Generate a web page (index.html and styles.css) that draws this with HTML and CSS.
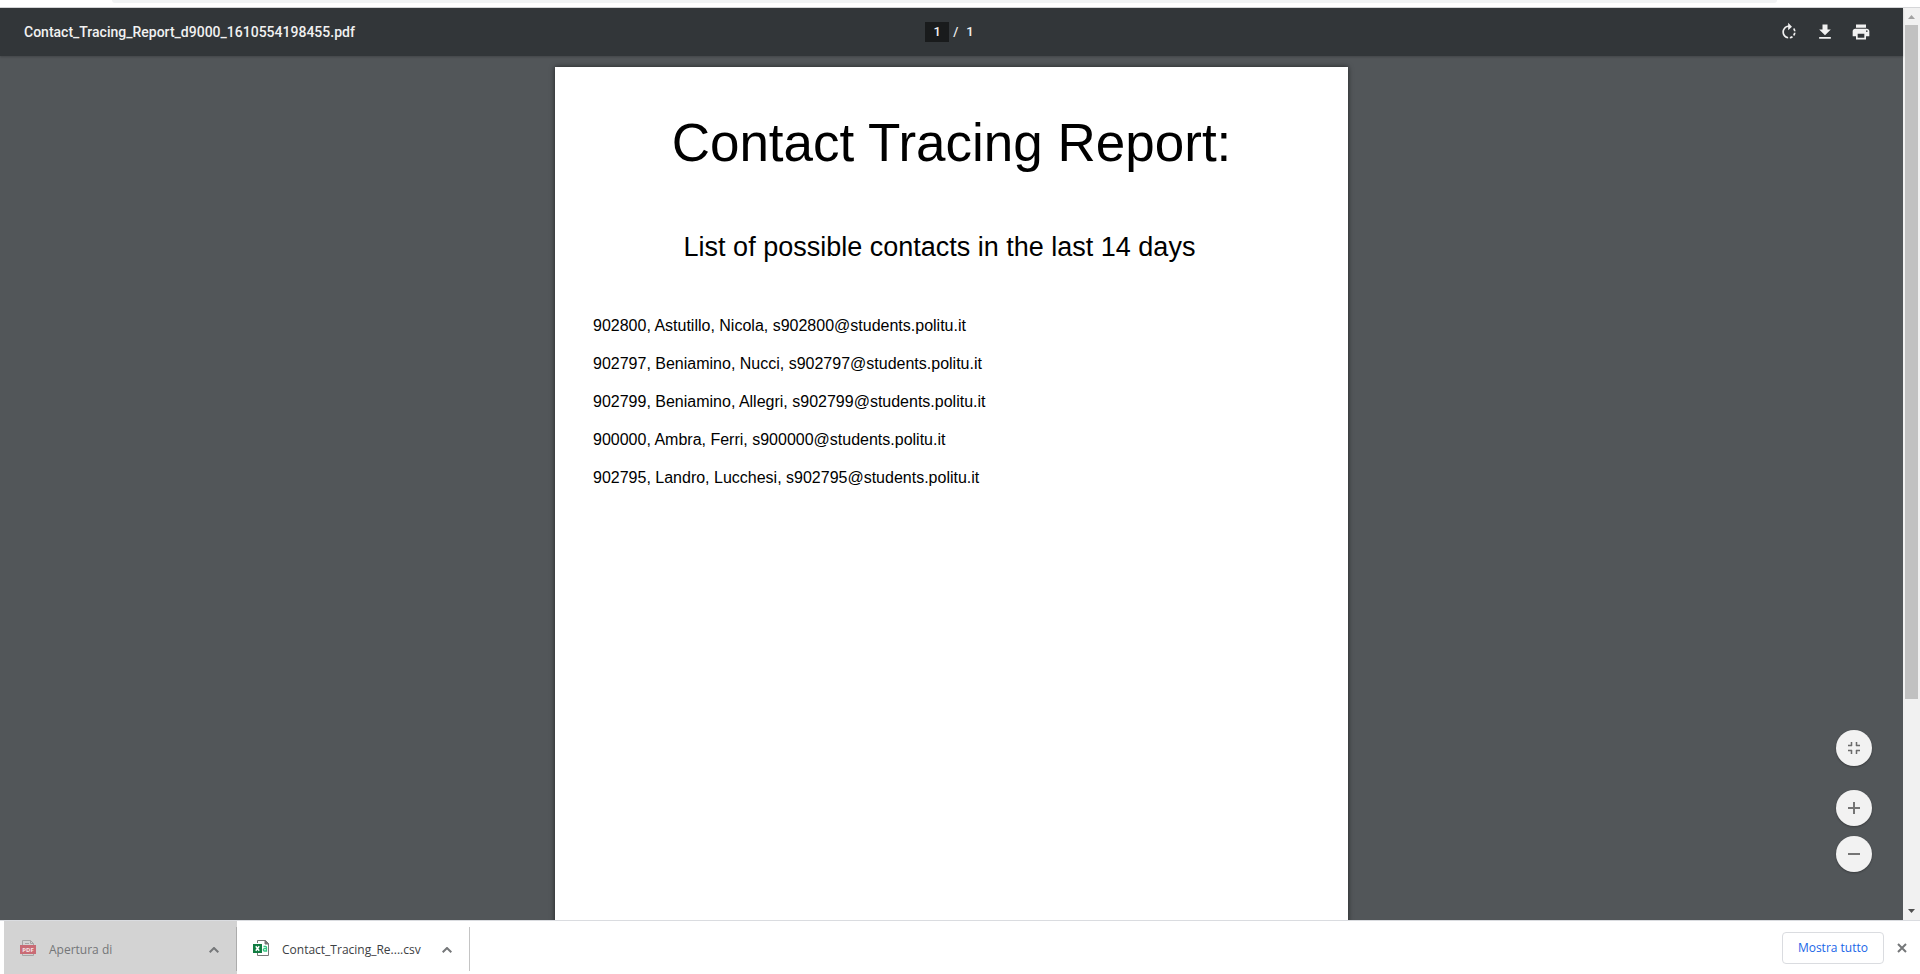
FILE: index.html
```html
<!DOCTYPE html>
<html lang="it">
<head>
<meta charset="utf-8">
<title>Contact_Tracing_Report_d9000_1610554198455.pdf</title>
<link rel="stylesheet" href="styles.css">
</head>
<body>
<div class="browser-edge"><div class="address-edge"></div></div>
<div class="content">
  <section class="viewer">
    <header class="toolbar">
      <div class="file-name">Contact_Tracing_Report_d9000_1610554198455.pdf</div>
      <div class="pager">
        <input class="page-input" type="text" value="1" aria-label="Page number">
        <span class="slash">/</span>
        <span>1</span>
      </div>
      <div class="actions">
        <button class="tool" type="button" aria-label="Rotate clockwise">
          <svg viewBox="0 0 24 24"><path d="M15.55 5.55L11 1v3.07C7.06 4.56 4 7.92 4 12s3.05 7.44 7 7.93v-2.02c-2.84-.48-5-2.94-5-5.91s2.16-5.43 5-5.91V10l4.55-4.45zM19.93 11c-.17-1.39-.72-2.73-1.62-3.89l-1.42 1.42c.54.75.88 1.6 1.02 2.47h2.02zM13 17.9v2.02c1.39-.17 2.74-.71 3.9-1.61l-1.44-1.44c-.75.54-1.59.89-2.46 1.03zm3.89-2.42l1.42 1.41c.9-1.16 1.45-2.5 1.62-3.89h-2.02c-.14.87-.48 1.72-1.02 2.48z"/></svg>
        </button>
        <button class="tool" type="button" aria-label="Download">
          <svg viewBox="0 0 24 24"><path d="M19 9h-4V3H9v6H5l7 7 7-7zM5 18v2h14v-2H5z"/></svg>
        </button>
        <button class="tool" type="button" aria-label="Print">
          <svg viewBox="0 0 24 24"><path d="M19 8H5c-1.660 0-3 1.340-3 3v6h4v4h12v-4h4v-6c0-1.660-1.340-3-3-3zm-3 11H8v-5h8v5zm3-7c-.55 0-1-.45-1-1s.45-1 1-1 1 .45 1 1-.45 1-1 1zm-1-9H6v4h12V3z"/></svg>
        </button>
      </div>
    </header>
    <main class="canvas">
      <article class="page">
        <h1 class="report-title">Contact Tracing Report:</h1>
        <h2 class="report-subtitle">List of possible contacts in the last 14 days</h2>
        <ul class="contacts">
          <li>902800, Astutillo, Nicola, s902800@students.politu.it</li>
          <li>902797, Beniamino, Nucci, s902797@students.politu.it</li>
          <li>902799, Beniamino, Allegri, s902799@students.politu.it</li>
          <li>900000, Ambra, Ferri, s900000@students.politu.it</li>
          <li>902795, Landro, Lucchesi, s902795@students.politu.it</li>
        </ul>
      </article>
    </main>
    <div class="zoom-controls">
      <button class="fab fab-fit" type="button" aria-label="Fit to page">
        <svg viewBox="0 0 12 12"><path d="M0 3h3V0h1v4H0zM8 0h1v3h3v1H8zM0 8h4v4H3V9H0zM8 8h4v1H9v3H8z" stroke="#616161" stroke-width=".5"/></svg>
      </button>
      <button class="fab" type="button" aria-label="Zoom in">
        <svg viewBox="0 0 12 12"><path d="M5 0h2v5h5v2H7v5H5V7H0V5h5z"/></svg>
      </button>
      <button class="fab" type="button" aria-label="Zoom out">
        <svg viewBox="0 0 12 12"><path d="M0 5h12v2H0z"/></svg>
      </button>
    </div>
  </section>
  <div class="scrollbar" aria-hidden="true">
    <svg class="arrow arrow-up" viewBox="0 0 17 17"><path d="M5 11h7L8.500 7z"/></svg>
    <div class="track"><div class="thumb"></div></div>
    <svg class="arrow" viewBox="0 0 17 17"><path d="M5 6h7l-3.500 4z"/></svg>
  </div>
</div>
<footer class="downloads">
  <div class="download opening">
    <svg class="file-icon" viewBox="0 0 16 16"><path d="M2.500 5V.5h8l3 3V5M10.500.5v3h3M2.500 13v2.500h11V13M5 3.500h4" fill="none" stroke="#a5a5a5"/><rect y="5" width="16" height="9" fill="#c96b75"/><text x="8" y="12" text-anchor="middle" class="pdf-mark">PDF</text></svg>
    <span class="download-name">Apertura di</span>
    <button class="menu" type="button" aria-label="Download options"><svg viewBox="0 0 10 6"><path d="M.7 5.300L5 1l4.300 4.300"/></svg></button>
  </div>
  <div class="download">
    <svg class="file-icon" viewBox="0 0 16 16"><path d="M4.500 3V.5h8l3 3v12h-11V13M12 .5V4h3.500" fill="#fff" stroke="#777"/><path d="M12 0l4 4h-4z" fill="#777"/><rect y="4" width="9" height="9" fill="#107c41"/><path d="M2.800 6.200l3.400 4.600M6.200 6.200l-3.400 4.600" stroke="#fff" stroke-width="1.500"/><path d="M10.500 6.500h2q1 0 1 1V11h-2q-1.200 0-1.200-1.200t1.200-1.200h2" fill="none" stroke="#33c481" stroke-width="1.300"/></svg>
    <span class="download-name">Contact_Tracing_Re....csv</span>
    <button class="menu" type="button" aria-label="Download options"><svg viewBox="0 0 10 6"><path d="M.7 5.300L5 1l4.300 4.300"/></svg></button>
  </div>
  <button class="show-all" type="button">Mostra tutto</button>
  <button class="close" type="button" aria-label="Close"><svg viewBox="0 0 10 10"><path d="M1 1l8 8M9 1L1 9"/></svg></button>
</footer>
</body>
</html>
```
FILE: styles.css
```css
* { box-sizing: border-box; }

body {
  margin: 0;
  height: 100vh;
  display: flex;
  flex-direction: column;
  overflow: hidden;
  background: #fff;
  font-family: "Open Sans", "Noto Sans", sans-serif;
  font-size: 12px;
}

button {
  display: flex;
  align-items: center;
  justify-content: center;
  padding: 0;
  border: 0;
  background: none;
  font: inherit;
}

svg { display: block; }

.browser-edge {
  flex: none;
  height: 8px;
  padding: 0 143px 0 112px;
  border-bottom: 1px solid #d5d6d8;
}

.address-edge {
  height: 3px;
  border-radius: 0 0 12px 12px;
  background: #f1f3f4;
}

.content {
  flex: 1;
  min-height: 0;
  display: flex;
}

.viewer {
  position: relative;
  flex: 1;
  min-width: 0;
  display: flex;
  flex-direction: column;
  background: #525659;
}

.toolbar {
  z-index: 1;
  flex: none;
  height: 48px;
  padding: 0 32px 0 24px;
  display: grid;
  grid-template-columns: 1fr auto 1fr;
  align-items: center;
  background: #323639;
  box-shadow: 0 1px 2px rgba(0, 0, 0, .2);
  color: #f1f1f1;
  font-family: Roboto, sans-serif;
  font-size: 13px;
  font-weight: 500;
}

.file-name {
  font-size: 14px;
}

.pager {
  display: flex;
  align-items: center;
  padding-left: 4px;
  line-height: 20px;
}

.page-input {
  width: 24px;
  height: 20px;
  padding: 0;
  border: 0;
  background: #191b1c;
  color: inherit;
  font: inherit;
  text-align: center;
}

.slash { margin: 0 8px 0 4px; }

.actions {
  display: flex;
  justify-content: flex-end;
  gap: 16px;
}

.tool svg {
  width: 20px;
  height: 20px;
  fill: #f1f1f1;
}

.canvas {
  flex: 1;
  min-height: 0;
  padding-top: 11px;
  overflow: hidden;
}

.page {
  width: 793px;
  max-width: 100%;
  min-height: 1122px;
  margin: 0 auto;
  padding: 38px;
  background: #fff;
  box-shadow: 0 0 5px rgba(0, 0, 0, .6);
  color: #000;
  font-family: "Liberation Sans", Arial, sans-serif;
  font-size: 16px;
}

.report-title {
  margin: 0;
  font-size: 53px;
  font-weight: 400;
  line-height: 76px;
  text-align: center;
}

.report-subtitle {
  margin: 47px 24px 41px 0;
  font-size: 27px;
  font-weight: 400;
  line-height: 38px;
  text-align: center;
}

.contacts {
  margin: 0;
  padding: 0;
  list-style: none;
  line-height: 38px;
}

.zoom-controls {
  position: absolute;
  right: 31px;
  bottom: 48px;
  display: flex;
  flex-direction: column;
  gap: 10px;
}

.fab {
  width: 36px;
  height: 36px;
  border-radius: 50%;
  background: #f2f2f2;
  box-shadow: 0 1px 2px rgba(0, 0, 0, .3);
}

.fab-fit { margin-bottom: 14px; }

.fab svg {
  width: 12px;
  height: 12px;
  fill: #757575;
}

.scrollbar {
  width: 17px;
  display: flex;
  flex-direction: column;
  background: #f1f1f1;
}

.arrow {
  height: 17px;
  fill: #505050;
}

.arrow-up { fill: #a3a3a3; }

.track {
  flex: 1;
  padding: 0 2px;
}

.thumb {
  height: 76.8%;
  background: #c1c1c1;
}

.downloads {
  flex: none;
  height: 54px;
  padding: 0 13px 0 4px;
  display: flex;
  align-items: center;
  border-top: 1px solid #dadce0;
}

.download {
  position: relative;
  align-self: stretch;
  width: 233px;
  padding: 4px 18px 0 16px;
  display: flex;
  align-items: center;
  color: #3c4043;
}

.download::after {
  content: "";
  position: absolute;
  top: 6px;
  right: 0;
  bottom: 3px;
  width: 1px;
  background: #c4c4c4;
}

.opening {
  background: #d3d3d3;
  color: #747678;
}

.opening::after { background: #acacac; }

.file-icon {
  width: 16px;
  height: 16px;
  margin: 0 13px 4px 0;
}

.pdf-mark {
  fill: #f5e5e7;
  font: 700 6px "Open Sans", sans-serif;
}

.download-name { flex: 1; }

.menu svg {
  width: 10px;
  height: 6px;
}

.menu path,
.close path {
  fill: none;
  stroke: #757779;
  stroke-width: 2;
}

.show-all {
  height: 32px;
  margin-left: auto;
  padding: 0 15px;
  border: 1px solid #dadce0;
  border-radius: 4px;
  color: #1a66e8;
}

.close { margin-left: 13px; }

.close svg {
  width: 10px;
  height: 10px;
}
```
